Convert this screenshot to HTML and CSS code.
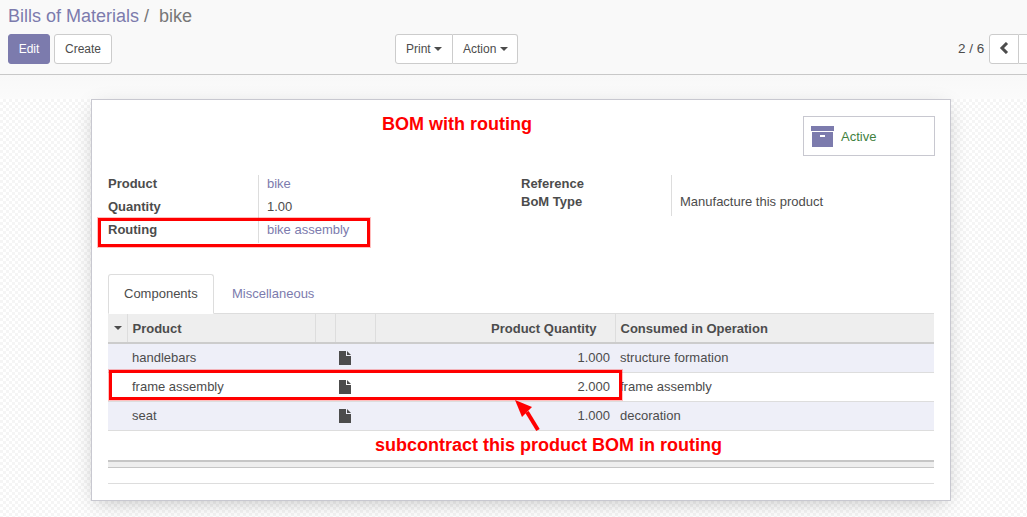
FILE: index.html
```html
<!DOCTYPE html>
<html lang="en">
<head>
<meta charset="utf-8">
<title>Bills of Materials / bike</title>
<link rel="stylesheet" href="styles.css">
</head>
<body>
<header class="panel">
  <div class="crumbs"><a class="crumb-link">Bills of Materials</a><span class="crumb-sep">/</span><span class="crumb-current">bike</span></div>
  <div class="toolbar">
    <div class="tool-left">
      <button class="btn btn-primary">Edit</button>
      <button class="btn">Create</button>
    </div>
    <div class="tool-mid">
      <div class="btn-group">
        <button class="btn">Print <i class="caret"></i></button>
        <button class="btn">Action <i class="caret"></i></button>
      </div>
    </div>
    <div class="tool-right">
      <span class="pager">2 / 6</span>
      <div class="btn-group">
        <button class="btn btn-page"><svg width="10" height="12" viewBox="0 0 10 12"><path d="M8 1 3 6l5 5" fill="none" stroke="#4c4c4c" stroke-width="3"/></svg></button>
        <button class="btn btn-page"></button>
      </div>
    </div>
  </div>
</header>
<main class="content">
  <section class="sheet">
    <div class="title-row">
      <h1 class="anno-title">BOM with routing</h1>
      <div class="stat-btn">
        <svg class="stat-icon" width="23" height="21" viewBox="0 0 23 21"><path fill="#7c7bad" d="M0 0h23v5H0zM1 6h21v15H1z"/><path fill="#fff" d="M9 9h5v2H9z"/></svg>
        <span class="stat-text">Active</span>
      </div>
    </div>
    <div class="fields">
      <div class="field-col">
        <div class="field"><b class="f-label">Product</b><a class="f-value link">bike</a></div>
        <div class="field"><b class="f-label">Quantity</b><span class="f-value">1.00</span></div>
        <div class="field"><b class="f-label">Routing</b><a class="f-value link">bike assembly</a></div>
      </div>
      <div class="field-col col-right">
        <div class="field"><b class="f-label">Reference</b><span class="f-value"></span></div>
        <div class="field"><b class="f-label">BoM Type</b><span class="f-value">Manufacture this product</span></div>
      </div>
    </div>
    <nav class="tabs">
      <a class="tab tab-active">Components</a>
      <a class="tab">Miscellaneous</a>
    </nav>
    <table class="grid">
      <colgroup>
        <col class="c-sort"><col class="c-prod"><col class="c-a"><col class="c-b"><col class="c-qty"><col>
      </colgroup>
      <thead>
        <tr>
          <th class="th-sort"><i class="caret caret-dark"></i></th>
          <th>Product</th><th></th><th></th>
          <th class="num">Product Quantity</th>
          <th>Consumed in Operation</th>
        </tr>
      </thead>
      <tbody>
        <tr class="odd">
          <td></td><td>handlebars</td><td></td>
          <td class="doc"><svg width="12" height="14" viewBox="0 0 12 14"><path fill="#4c4c4c" d="M0 0h7v5h5v9H0zM8 0l4 4H8z"/></svg></td>
          <td class="num">1.000</td><td>structure formation</td>
        </tr>
        <tr>
          <td></td><td>frame assembly</td><td></td>
          <td class="doc"><svg width="12" height="14" viewBox="0 0 12 14"><path fill="#4c4c4c" d="M0 0h7v5h5v9H0zM8 0l4 4H8z"/></svg></td>
          <td class="num">2.000</td><td>frame assembly</td>
        </tr>
        <tr class="odd">
          <td></td><td>seat</td><td></td>
          <td class="doc"><svg width="12" height="14" viewBox="0 0 12 14"><path fill="#4c4c4c" d="M0 0h7v5h5v9H0zM8 0l4 4H8z"/></svg></td>
          <td class="num">1.000</td><td>decoration</td>
        </tr>
      </tbody>
    </table>
    <p class="anno-sub">subcontract this product BOM in routing</p>
    <div class="grid-foot"></div>
    <div class="sheet-rule"></div>
    <div class="box box-routing"></div>
    <div class="box box-row"></div>
    <svg class="arrow" width="30" height="36" viewBox="0 0 30 36"><path d="M27 34 16 16" stroke="#f00" stroke-width="4" fill="none"/><path fill="#f00" d="M4 4l17 7-10 10z"/></svg>
  </section>
</main>
</body>
</html>
```
FILE: styles.css
```css
* { box-sizing: border-box; }
html, body { margin: 0; height: 517px; overflow: hidden; }
body {
  width: 1027px;
  font-family: "Liberation Sans", Arial, sans-serif;
  font-size: 13px;
  color: #4c4c4c;
  background: #fff;
  line-height: 18px;
}
.panel {
  height: 75px;
  background: #f9f9f9;
  border-bottom: 1px solid #c8c8c8;
  padding: 5px 0 0 8px;
}
.crumbs { font-size: 18px; line-height: 22px; height: 29px; color: #777; white-space: pre; }
.crumb-link { color: #7c7bad; }
.crumb-sep { color: #777; margin: 0 10px 0 5px; }
.toolbar { display: flex; align-items: center; height: 30px; }
.tool-left { display: flex; gap: 4px; width: 387px; }
.tool-mid { width: 563px; }
.tool-right { display: flex; align-items: center; width: 69px; white-space: nowrap; }
.pager { margin-right: 5px; font-size: 13.5px; width: 26px; flex: none; }
.btn {
  height: 30px;
  padding: 0 10px;
  border: 1px solid #ccc;
  border-radius: 3px;
  background: #fff;
  color: #4c4c4c;
  font: 12px/18px "Liberation Sans", Arial, sans-serif;
  white-space: nowrap;
}
.btn-primary { background: #7c7bad; border-color: #7c7bad; color: #fff; width: 42px; padding: 0; }
.btn-group { display: flex; flex: none; }
.btn-group .btn:first-child { border-radius: 3px 0 0 3px; }
.btn-group .btn + .btn { border-left: 0; border-radius: 0 3px 3px 0; padding-right: 9px; }
.btn-group .btn-page { width: 30px; padding: 2px 0 0; flex: none; }
.caret {
  display: inline-block;
  width: 0; height: 0;
  margin-left: 0;
  vertical-align: 2px;
  border-top: 4px solid #4c4c4c;
  border-left: 4px solid transparent;
  border-right: 4px solid transparent;
}
.content {
  height: 442px;
  padding: 24px 0 0 91px;
  background:
    linear-gradient(#f8f8f8, #fbfbfb) 0 0 / 100% 24px no-repeat,
    conic-gradient(#f5f5f5 25%, #fff 0 50%, #f5f5f5 0 75%, #fff 0) 0 0 / 6px 6px;
}
.sheet {
  position: relative;
  width: 860px;
  height: 402px;
  padding: 16px 16px 0;
  background: #fff;
  border: 1px solid #c8c8d0;
  box-shadow: 0 5px 20px -5px rgba(0,0,0,.25);
}
.title-row { display: flex; height: 59px; }
.anno-title { margin: -3px 0 0 274px; width: 421px; flex: none; font-size: 18px; line-height: 22px; font-weight: 700; color: #f00; }
.stat-btn {
  display: flex; align-items: center;
  width: 132px; height: 40px;
  padding-left: 7px;
  border: 1px solid #c8c8d0;
  flex: none;
}
.stat-icon { margin: 1px 7px 0 0; }
.stat-text { color: #3f7f3f; padding-top: 1px; }
.fields { display: flex; height: 99px; }
.field-col { width: 413px; }
.field { display: flex; height: 23px; }
.field:last-child { height: 22px; }
.col-right .field:first-child { height: 18px; }
.col-right .field:last-child { height: 23px; }
.f-label { width: 150px; flex: none; }
.f-value { padding-left: 8px; border-left: 1px solid #ddd; flex: 1; }
.link { color: #7c7bad; }
.tabs { display: flex; height: 40px; border-bottom: 1px solid #ddd; }
.tab { height: 40px; padding: 11px 16px 0; color: #7c7bad; }
.tab + .tab { margin-left: 2px; }
.tab-active {
  width: 106px;
  color: #4c4c4c;
  background: #fff;
  border: 1px solid #ddd;
  border-bottom-color: #fff;
  border-radius: 3px 3px 0 0;
  padding: 10px 16px 0 15px;
}
.grid { width: 826px; border-collapse: collapse; table-layout: fixed; }
.c-sort { width: 19px; }
.c-prod { width: 188px; }
.c-a { width: 20px; }
.c-b { width: 40px; }
.c-qty { width: 240px; }
.grid th {
  height: 29px;
  padding: 2px 5px 0;
  background: #eee;
  border-left: 1px solid #ddd;
  border-bottom: 2px solid #ccc;
  text-align: left;
  font-weight: 700;
}
.grid th:first-child { border-left: 0; }
.grid th.num { text-align: right; padding-right: 18px; }
.th-sort { padding: 0 0 0 6px !important; }
.th-sort .caret { margin: 0; vertical-align: 2px; }
.grid td { height: 29px; padding: 0 5px; border-bottom: 1px solid #ddd; white-space: nowrap; }
.grid td.num { text-align: right; padding-right: 5px; }
.grid td.doc { line-height: 0; padding-left: 4px; }
.odd td { background: #eeeff8; }
.doc svg { vertical-align: middle; }
.anno-sub {
  margin: 0;
  height: 29px;
  padding: 3px 0 0 267px;
  font-size: 18px;
  line-height: 22px;
  font-weight: 700;
  color: #f00;
}
.grid-foot { height: 8px; background: #eee; border-top: 2px solid #c6c6c6; border-bottom: 1px solid #c6c6c6; }
.sheet-rule { margin-top: 15px; border-top: 1px solid #ddd; }
.box { position: absolute; border: 3px solid #f00; box-shadow: 0 0 0 1px rgba(255,0,0,.25); }
.box-routing { left: 6px; top: 118px; width: 272px; height: 29px; }
.box-row { left: 17px; top: 270px; width: 513px; height: 30px; }
.arrow { position: absolute; left: 419px; top: 296px; }
```
